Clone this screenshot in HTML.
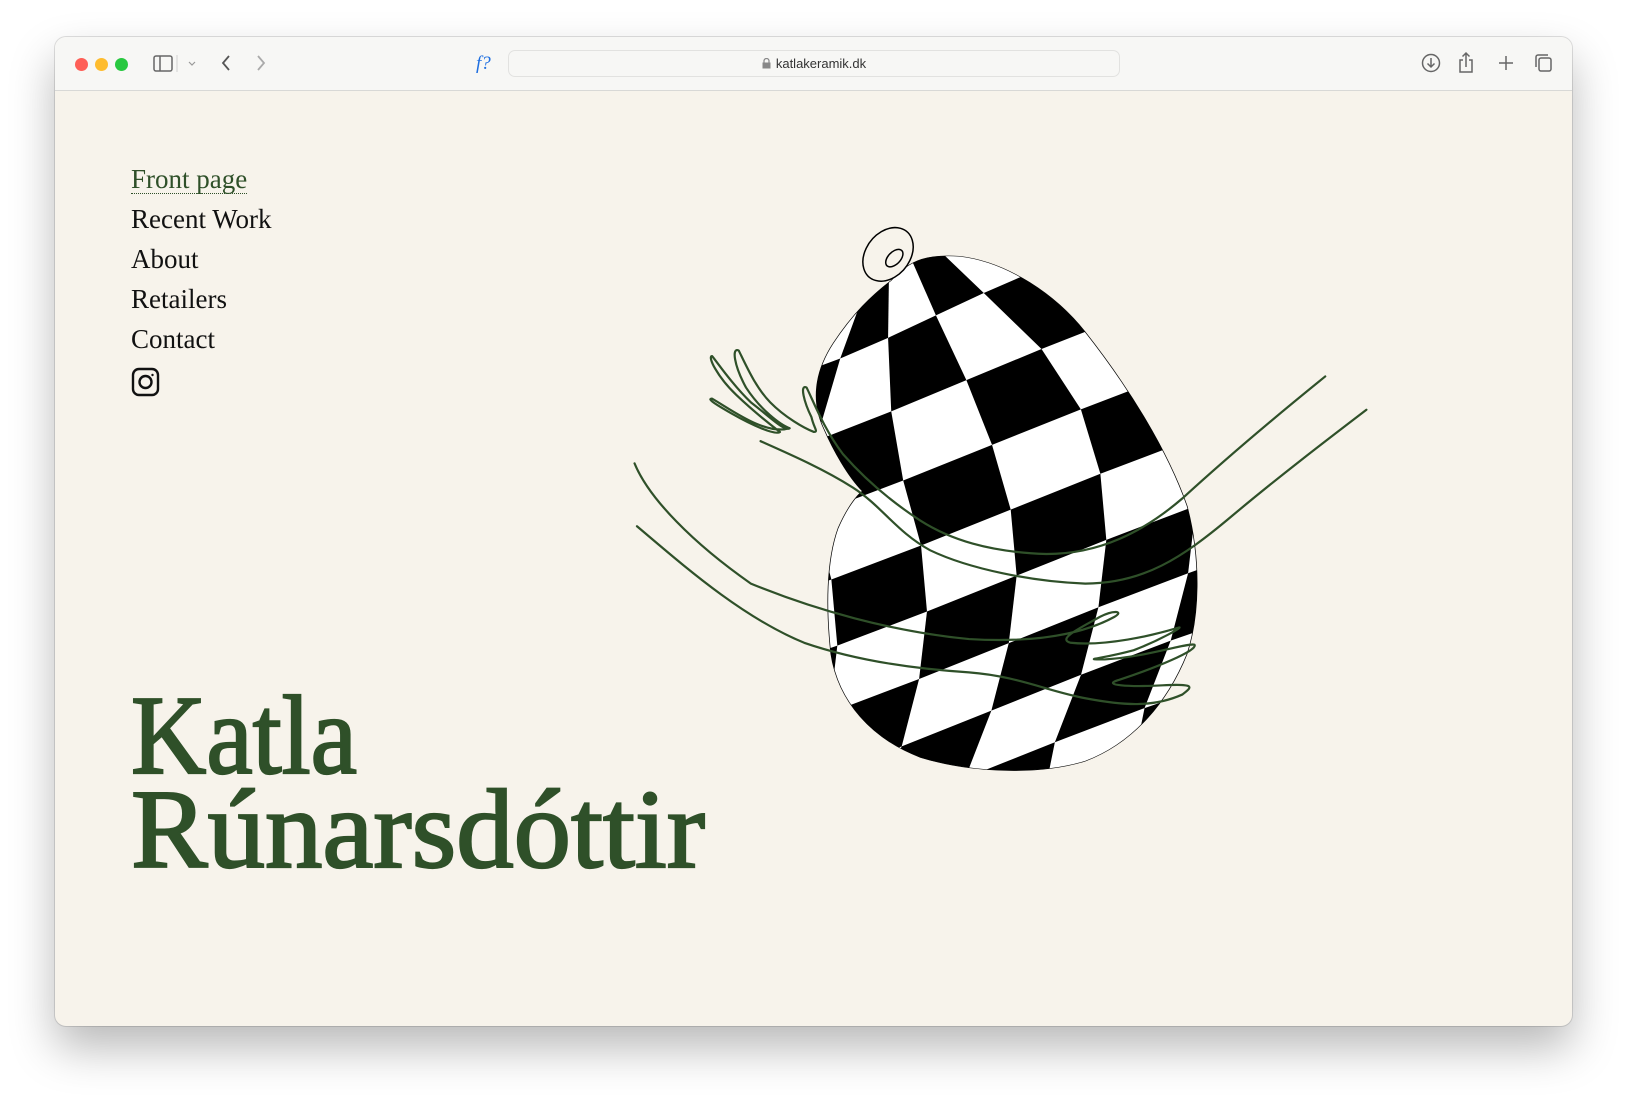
<!DOCTYPE html>
<html><head><meta charset="utf-8"><style>
html,body{margin:0;padding:0;width:1628px;height:1100px;background:#fff;overflow:hidden;font-family:"Liberation Sans",sans-serif}
.win{position:absolute;left:55px;top:37px;width:1517px;height:989px;border-radius:11px;background:#f7f3eb;box-shadow:0 22px 45px rgba(0,0,0,.28),0 0 0 1px rgba(0,0,0,.12);overflow:hidden}
.bar{position:absolute;left:0;top:0;width:100%;height:53px;background:#f7f7f5;border-bottom:1px solid #d8d8d6}
.dot{position:absolute;top:21px;width:13px;height:13px;border-radius:50%}
.url{position:absolute;left:453px;top:13px;width:612px;height:27px;border:1px solid #e2e2e0;border-radius:7px;background:#f7f7f5;box-sizing:border-box}
.url span{position:absolute;left:0;right:0;top:5px;text-align:center;font-size:13px;color:#333}
.nav{position:absolute;left:76px;top:122px;font-family:"Liberation Serif",serif;font-size:27px;line-height:40px;color:#111}
.nav div{height:40px}
.nav .cur{color:#2f5029;display:inline-block;line-height:28px;border-bottom:1.5px dotted #2f5029}
</style></head><body>
<div class="win">
 <div class="bar">
  <div class="dot" style="left:20px;background:#fe5f57"></div>
  <div class="dot" style="left:40px;background:#febc2e"></div>
  <div class="dot" style="left:60px;background:#28c840"></div>
  <svg style="position:absolute;left:0;top:0" width="1517" height="53" fill="none" stroke="#666" stroke-width="1.5">
   <rect x="99" y="19" width="18" height="15" rx="2"/><line x1="105" y1="19" x2="105" y2="34"/>
   <line x1="122" y1="18" x2="122" y2="35" stroke="#ddd"/>
   <path d="M134 25l3 3 3-3" stroke="#999" stroke-width="1.2"/>
   <path d="M174 19l-6 7 6 7" stroke="#555" stroke-width="1.8"/>
   <path d="M203 19l6 7-6 7" stroke="#aaa" stroke-width="1.8"/>
   <text x="421" y="32" fill="#1f6fe0" stroke="none" font-family="Liberation Serif" font-style="italic" font-size="19">f?</text>
   <path d="M1057 22a6 6 0 1 0 4 2M1061 20v4h-4" stroke="#888" stroke-width="1.3"/>
   <circle cx="1376" cy="26" r="8.5"/><path d="M1376 21v9M1372.5 26.5l3.5 3.5 3.5-3.5"/>
   <path d="M1408 23h-3v12h12V23h-3M1411 30V16M1407.5 19.5l3.5-3.5 3.5 3.5"/>
   <path d="M1451 19v14M1444 26h14"/>
   <rect x="1484" y="21" width="12" height="13" rx="2"/><path d="M1481 30V20a2 2 0 0 1 2-2h10"/>
  </svg>
  <div class="url"><span><svg width="9" height="11" style="vertical-align:-1px;margin-right:5px"><rect x="0.5" y="4.5" width="8" height="6" fill="#888"/><path d="M2 5V3a2.5 2.5 0 0 1 5 0v2" fill="none" stroke="#888" stroke-width="1.2"/></svg>katlakeramik.dk</span></div>
 </div>
 <div class="nav">
  <div><span class="cur">Front page</span></div>
  <div>Recent Work</div>
  <div>About</div>
  <div>Retailers</div>
  <div>Contact</div>
  <svg width="30" height="30" style="margin-top:8px" fill="none" stroke="#111" stroke-width="2.4"><rect x="2" y="2" width="25" height="26" rx="6"/><circle cx="14.5" cy="15" r="6"/><circle cx="21.5" cy="8" r="1.2" fill="#111" stroke="none"/></svg>
 </div>
 <svg style="position:absolute;left:0;top:0" width="1517" height="989">
  <g fill="#2f5029" stroke="#2f5029" stroke-width="2.2" font-family="Liberation Serif,serif" font-size="112">
   <text x="76" y="736" textLength="226" lengthAdjust="spacingAndGlyphs">Katla</text>
   <text x="76" y="830" textLength="574" lengthAdjust="spacingAndGlyphs">Rúnarsdóttir</text>
  </g>
 </svg>
</div>
<svg id="art" style="position:absolute;left:620px;top:210px" width="760" height="580" viewBox="0 0 1568 1568" preserveAspectRatio="none">
 <defs><clipPath id="cp"><path id="sil" d="M560 190 C600 130 640 120 700 125 C800 140 900 230 960 330 C1050 480 1130 650 1170 800 C1200 950 1195 1100 1170 1200 C1130 1330 1060 1440 960 1490 C860 1530 720 1520 620 1480 C520 1430 450 1330 435 1200 C425 1080 425 950 450 860 C470 800 490 770 500 760 C470 720 440 650 420 590 C395 520 400 440 440 360 C480 280 520 230 560 190Z"/></clipPath></defs>
 <g clip-path="url(#cp)"><rect width="1568" height="1568" fill="#fff"/><g id="chk" fill="#000"></g></g>
 <use href="#sil" fill="none" stroke="#000" stroke-width="1.5" vector-effect="non-scaling-stroke"/>
 <ellipse cx="553" cy="120" rx="48" ry="75" transform="rotate(20 553 120)" fill="#f7f3eb" stroke="#000" stroke-width="1.5" vector-effect="non-scaling-stroke"/>
 <ellipse cx="566" cy="130" rx="14" ry="26" transform="rotate(30 566 130)" fill="none" stroke="#000" stroke-width="1.5" vector-effect="non-scaling-stroke"/>
 <g fill="none" stroke="#2f5029" stroke-width="2.2" vector-effect="non-scaling-stroke" stroke-linecap="round" stroke-linejoin="round">
  <path vector-effect="non-scaling-stroke" d="M290 625 C350 660 420 700 480 750 C540 800 570 870 640 920 C720 970 850 1005 960 1010 C1080 1010 1160 940 1260 830 C1360 720 1460 620 1540 540"/>
  <path vector-effect="non-scaling-stroke" d="M1455 450 C1370 540 1260 660 1160 780 C1080 870 990 930 880 930 C760 925 680 890 620 840 C550 780 500 720 460 660 C420 590 400 520 385 480 C370 470 380 520 395 560 C400 590 410 600 400 600 C380 590 340 560 310 520 C280 480 260 420 245 380 C230 370 235 420 260 480 C290 540 330 580 350 590 C340 600 310 560 270 520 C230 470 200 410 190 395 C180 395 200 450 240 500 C280 550 320 590 330 600 C320 610 270 580 230 550 C190 520 180 510 190 510 C230 540 300 610 350 590"/>
  <path vector-effect="non-scaling-stroke" d="M30 685 C60 780 150 900 270 1010 C400 1080 560 1140 720 1160 C850 1170 950 1150 1020 1100 C1040 1085 1020 1080 990 1100 C950 1130 900 1160 930 1170 C1000 1180 1100 1150 1150 1130 C1170 1120 1120 1160 1060 1190 C990 1215 950 1215 1000 1215 C1080 1210 1170 1170 1185 1175 C1195 1190 1100 1240 1030 1270 C990 1285 1050 1290 1120 1285 C1190 1280 1180 1290 1160 1310 C1100 1345 1040 1340 960 1320 C880 1300 820 1260 720 1250 C600 1240 480 1215 380 1170 C250 1100 130 960 35 855"/>
 </g>
</svg>
<script>
(function(){
 var g=document.getElementById('chk'),s='';
 function xc(y){var v=(y-150)/1400;return 600+230*Math.sin(Math.PI*Math.min(Math.max(v,0),1)*0.75);}
 function cw(y){var v=(y-150)/1400;v=Math.min(Math.max(v,0),1);return 45+140*Math.sin(Math.PI*Math.min(v*1.3,0.5)*1);}
 function P(i,j){var y=130+j*175+ (j>0? -20:0);var x=xc(y)+i*cw(y)+ (y>900?-(y-900)*0.1:0);var yy=y-0.42*(x-xc(y))-40*Math.sin(i*0.5);return [x,yy];}
 for(var i=-7;i<7;i++)for(var j=0;j<10;j++){if((i+j)%2!==0)continue;
  var a=P(i,j),b=P(i+1,j),c=P(i+1,j+1),d=P(i,j+1);
  s+='<path d="M'+a+' L'+b+' L'+c+' L'+d+'Z"/>';}
 g.innerHTML=s;
})();
</script>
</body></html>
